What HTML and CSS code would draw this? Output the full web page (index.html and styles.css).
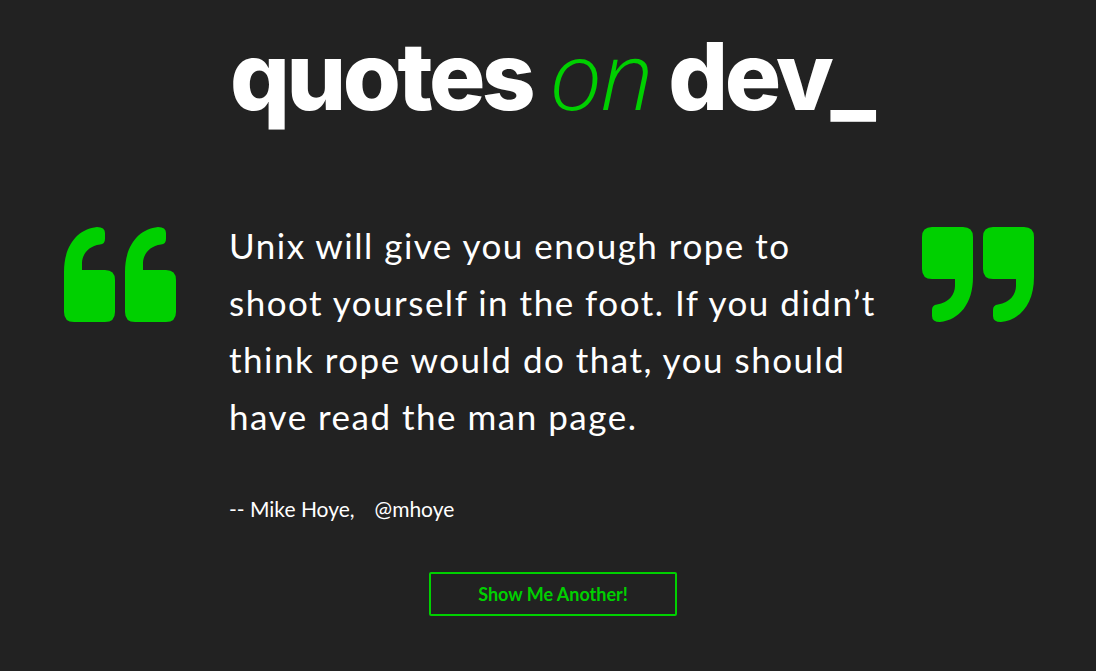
FILE: index.html
```html
<!DOCTYPE html>
<html lang="en">
<head>
<meta charset="utf-8">
<title>quotes on dev</title>
<link rel="stylesheet" href="styles.css">
</head>
<body>
<main class="page">
  <h1 class="logo">quotes <span class="logo-on">on</span> dev<span class="logo-cursor">_</span></h1>
  <section class="quote">
    <svg class="mark" viewBox="0 0 112 95" aria-hidden="true">
      <path class="mark-path" d="M0 85 L0 45 C0 18 14 2 33 0 Q41 0 41 6 L41 12 Q41 17 36 17.5 C24 19 18 28 18 36 L18 43 L41 43 Q51 43 51 53 L51 85 Q51 95 41 95 L10 95 Q0 95 0 85 Z"/>
      <path class="mark-path" transform="translate(61 0)" d="M0 85 L0 45 C0 18 14 2 33 0 Q41 0 41 6 L41 12 Q41 17 36 17.5 C24 19 18 28 18 36 L18 43 L41 43 Q51 43 51 53 L51 85 Q51 95 41 95 L10 95 Q0 95 0 85 Z"/>
    </svg>
    <div class="quote-body">
      <p class="quote-text">Unix will give you enough rope to<br>shoot yourself in the foot. If you didn’t<br>think rope would do that, you should<br>have read the man page.</p>
      <p class="quote-author"><span class="author-name">-- Mike Hoye,</span><span class="author-handle">@mhoye</span></p>
    </div>
    <svg class="mark mark-close" viewBox="0 0 112 95" aria-hidden="true">
      <g transform="rotate(180 56 47.5)">
        <path class="mark-path" d="M0 85 L0 45 C0 18 14 2 33 0 Q41 0 41 6 L41 12 Q41 17 36 17.5 C24 19 18 28 18 36 L18 43 L41 43 Q51 43 51 53 L51 85 Q51 95 41 95 L10 95 Q0 95 0 85 Z"/>
        <path class="mark-path" transform="translate(61 0)" d="M0 85 L0 45 C0 18 14 2 33 0 Q41 0 41 6 L41 12 Q41 17 36 17.5 C24 19 18 28 18 36 L18 43 L41 43 Q51 43 51 53 L51 85 Q51 95 41 95 L10 95 Q0 95 0 85 Z"/>
      </g>
    </svg>
  </section>
  <div class="actions">
    <button class="btn" type="button">Show Me Another!</button>
  </div>
</main>
</body>
</html>
```

FILE: styles.css
```css
html, body {
  margin: 0;
  padding: 0;
  background: #222222;
  height: 100%;
}

body {
  color: #ffffff;
  font-family: "Lato", "Open Sans", sans-serif;
}

.page {
  display: flex;
  flex-direction: column;
  align-items: center;
  padding-top: 14px;
}

.logo {
  margin: 0 0 0 10px;
  font-family: "Inter", "Lato", sans-serif;
  font-weight: 800;
  font-size: 94px;
  line-height: 120px;
  letter-spacing: -3.5px;
  white-space: nowrap;
}

.logo-on {
  color: #00d000;
  font-style: italic;
  font-weight: 300;
  font-family: "Open Sans", sans-serif;
  letter-spacing: -2px;
}

.logo-cursor {
  letter-spacing: 0;
}

.quote {
  display: flex;
  align-items: flex-start;
  width: 970px;
  margin-top: 81px;
  margin-left: 2px;
}

.mark {
  width: 112px;
  height: 95px;
  flex: none;
  margin-top: 10px;
}

.mark-path {
  fill: #00d000;
}

.quote-body {
  flex: none;
  width: 693px;
  margin-left: 53px;
}

.quote-text {
  margin: 0;
  font-size: 35px;
  line-height: 57px;
  font-weight: 400;
  letter-spacing: 1.5px;
  white-space: nowrap;
}

.quote-author {
  margin: 49px 0 0;
  font-size: 21px;
  line-height: 30px;
  display: flex;
  gap: 20px;
}

.actions {
  margin-top: 48px;
  margin-left: 10px;
}

.btn {
  background: transparent;
  border: 2px solid #00d000;
  border-radius: 2px;
  color: #00d000;
  font-family: "Lato", sans-serif;
  font-weight: 700;
  font-size: 18px;
  width: 248px;
  height: 44px;
  padding: 0;
  cursor: pointer;
}
```
